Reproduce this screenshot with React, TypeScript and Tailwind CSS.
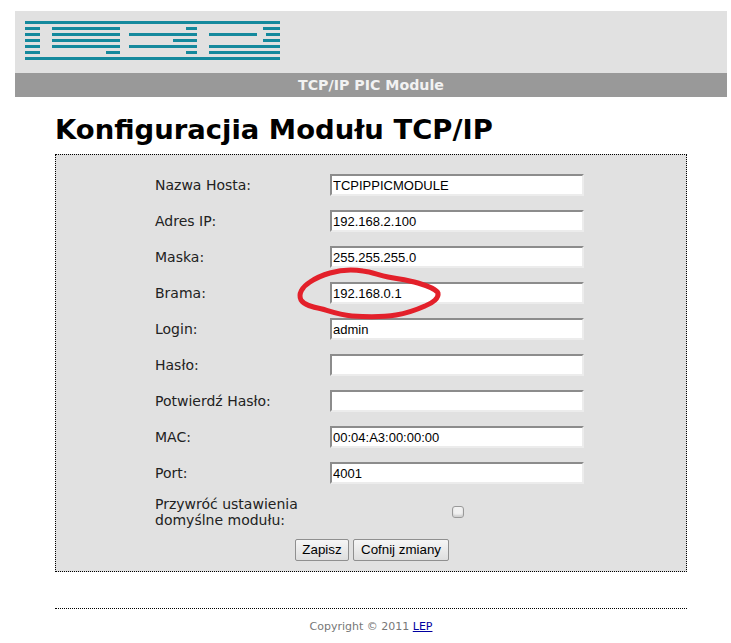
import React from "react";

const fields = [
  { label: "Nazwa Hosta:", value: "TCPIPPICMODULE" },
  { label: "Adres IP:", value: "192.168.2.100" },
  { label: "Maska:", value: "255.255.255.0" },
  { label: "Brama:", value: "192.168.0.1" },
  { label: "Login:", value: "admin" },
  { label: "Hasło:", value: "" },
  { label: "Potwierdź Hasło:", value: "" },
  { label: "MAC:", value: "00:04:A3:00:00:00" },
  { label: "Port:", value: "4001" },
];

// x ranges of the logo's bars, one line per row
const logoRows = [
  [[0, 255]],
  [[0, 15], [27, 95], [161, 172], [238, 255]],
  [[0, 15], [27, 95], [104, 172], [184, 232], [241, 255]],
  [[0, 15], [27, 95], [148, 172], [238, 255]],
  [[0, 15], [27, 95], [104, 172], [184, 255]],
  [[0, 15], [81, 95], [161, 172], [184, 255]],
  [[0, 255]],
];

const Logo = () => (
  <svg width="255" height="39" viewBox="0 0 255 39" className="block">
    {logoRows.map((row, i) =>
      row.map(([a, b]) => (
        <rect key={`${i}-${a}`} x={a} y={i * 6} width={b - a} height="3" fill="#14899d" />
      ))
    )}
  </svg>
);

const App: React.FC = () => {
  return (
    <div className="relative min-h-[643px] w-[731px] bg-white font-['DejaVu_Sans',sans-serif] text-black overflow-hidden">
      <div className="pt-[11px] pl-[15px] pr-[4px]">
        <div className="h-[62px] bg-[#e1e1e1] pl-[10px] pt-[10px]">
          <Logo />
        </div>
        <div className="h-[24px] bg-[#999999] text-center text-[14.2px] leading-[24px] font-bold text-[#f2f2f2]">
          TCP/IP PIC Module
        </div>
      </div>

      <div className="w-[632px] ml-[55px]">
        <h1 className="mt-[16px] h-[41px] text-[27.45px] leading-[34px] font-bold">Konfiguracjia Modułu TCP/IP</h1>

        <form className="h-[418px] border border-dotted border-black bg-[#e1e1e1] pt-[12px]">
          {fields.map((f) => (
            <div key={f.label} className="flex h-[36px] items-center pl-[99px]">
              <label className="w-[175px] text-[14px] text-[#222222]">{f.label}</label>
              <input
                readOnly
                value={f.value}
                type={f.label.includes("Hasło") ? "password" : "text"}
                className="h-[22px] w-[254px] border-2 border-t-[#8c8c8c] border-l-[#8c8c8c] border-b-[#ececec] border-r-[#ececec] bg-white px-[1px] font-['Liberation_Sans',sans-serif] text-[13px] text-black outline-none"
              />
            </div>
          ))}
          <div className="flex items-center pl-[99px] pt-[5px]">
            <label className="w-[175px] text-[14px] leading-[16px] text-[#222222]">
              Przywróć ustawienia domyślne modułu:
            </label>
            <input
              type="checkbox"
              className="ml-[122px] h-[12px] w-[12px] appearance-none rounded-[3px] border border-[#999999] bg-[#f1f1f1] shadow-[inset_0_-2px_2px_#cfcfcf]"
            />
          </div>
          <div className="mt-[11px] flex justify-center gap-[4px] pl-[2px] font-['Liberation_Sans',sans-serif] text-[13.33px] text-black">
            <button type="button" className="h-[22px] w-[54px] rounded-[2px] border border-[#8f8f8f] bg-gradient-to-b from-[#f6f6f6] to-[#dedede]">
              Zapisz
            </button>
            <button type="button" className="h-[22px] w-[96px] rounded-[2px] border border-[#8f8f8f] bg-gradient-to-b from-[#f6f6f6] to-[#dedede]">
              Cofnij zmiany
            </button>
          </div>
        </form>

        <div className="mt-[36px] border-t border-dotted border-black pt-[11px] text-center text-[11px] leading-[14px] text-[#777777]">
          Copyright © 2011 <a href="#" className="text-[#0000a0] underline">LEP</a>
        </div>
      </div>

      {/* red marker scribble drawn over the Brama field */}
      <svg width="731" height="643" viewBox="0 0 731 643" className="absolute left-0 top-0 pointer-events-none">
        <path
          d="M330 273 C340 270 352 269 363 271 C372 272 378 275 388 277 C398 279 408 280 418 283 C428 286 436 289 438 293 C439 298 433 303 425 306 C416 310 408 313 396 315 C384 317 368 317 352 316 C340 315 332 312 322 309 C312 307 304 305 301 300 C298 294 302 287 310 282 C316 278 323 275 330 273"
          fill="none"
          stroke="#e3202a"
          strokeWidth="5"
          strokeLinecap="round"
        />
      </svg>
    </div>
  );
};

export default App;
